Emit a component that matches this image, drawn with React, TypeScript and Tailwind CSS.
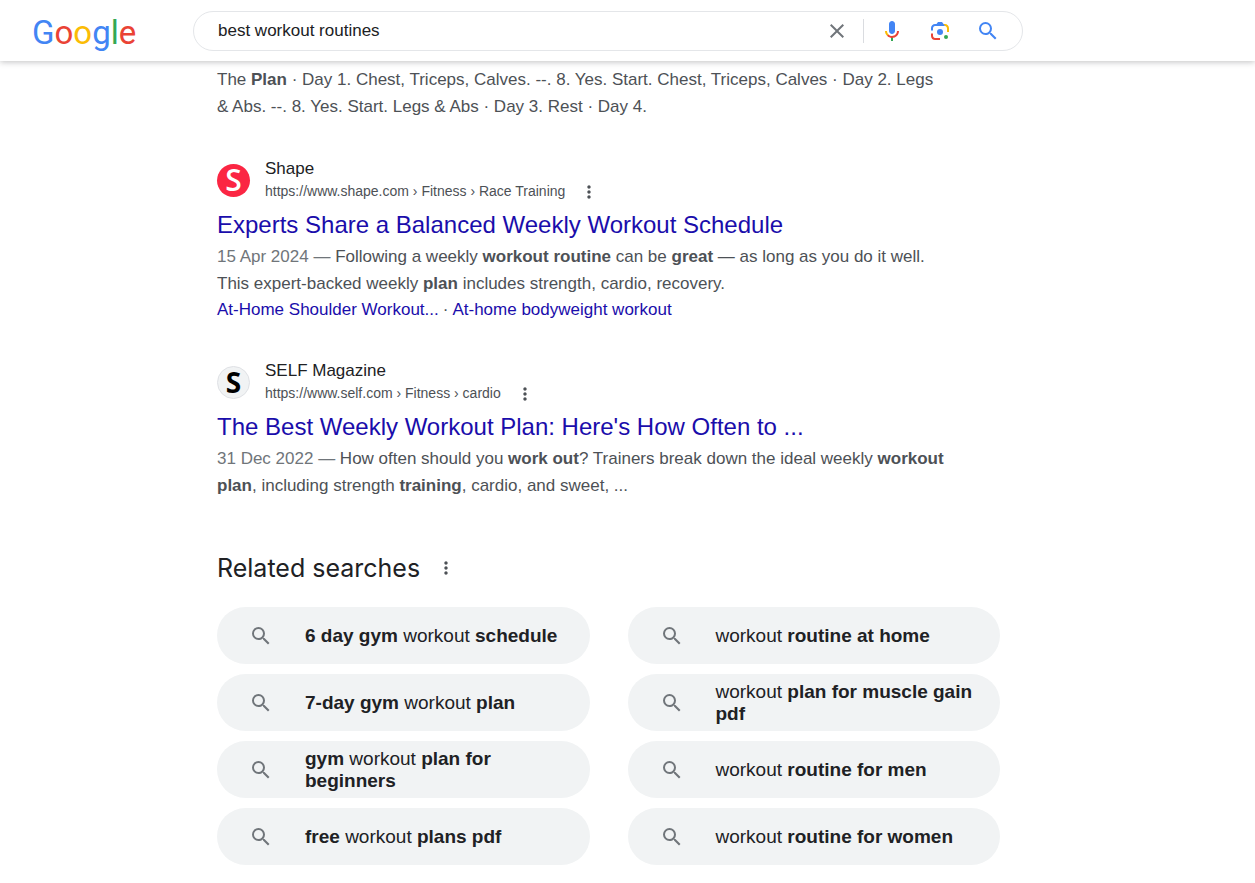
import React, { useState } from 'react';
import { MdClose, MdMoreVert, MdSearch } from 'react-icons/md';

interface SearchResultProps {
  site: string;
  url: string;
  title: string;
  date: string;
  favicon: React.ReactNode;
  children: React.ReactNode;
  links?: string[];
}

const relatedSearches: React.ReactNode[] = [
  <><b>6 day gym</b> workout <b>schedule</b></>,
  <>workout <b>routine at home</b></>,
  <><b>7-day gym</b> workout <b>plan</b></>,
  <>workout <b>plan for muscle gain pdf</b></>,
  <><b>gym</b> workout <b>plan for beginners</b></>,
  <>workout <b>routine for men</b></>,
  <><b>free</b> workout <b>plans pdf</b></>,
  <>workout <b>routine for women</b></>,
];

const Logo = () => (
  <a
    href="#"
    aria-label="Google"
    className="w-40 shrink-0 pl-8 pt-1 font-['Roboto',sans-serif] text-[33px] leading-10"
  >
    <span className="text-[#4285f4]">G</span>
    <span className="text-[#ea4335]">o</span>
    <span className="text-[#fbbc05]">o</span>
    <span className="text-[#4285f4]">g</span>
    <span className="text-[#34a853]">l</span>
    <span className="text-[#ea4335]">e</span>
  </a>
);

const MicIcon = () => (
  <svg viewBox="0 0 24 24" className="size-6">
    <path fill="#4285f4" d="m12 15c1.66 0 3-1.31 3-2.97v-7.02c0-1.66-1.34-3.01-3-3.01s-3 1.34-3 3.01v7.02c0 1.66 1.34 2.97 3 2.97z" />
    <path fill="#34a853" d="m11 18.08h2v3.92h-2z" />
    <path fill="#fbbc04" d="m7.05 16.87c-1.27-1.33-2.05-2.83-2.05-4.87h2c0 1.45 0.56 2.42 1.47 3.38v0.32l-1.15 1.18z" />
    <path fill="#ea4335" d="m12 16.93a4.97 5.25 0 0 1 -3.54 -1.55l-1.41 1.49c1.26 1.34 3.02 2.13 4.95 2.13 3.87 0 6.99-2.92 6.99-7h-1.99c0 2.92-2.24 4.93-5 4.93z" />
  </svg>
);

const LensIcon = () => (
  <svg viewBox="0 0 192 192" className="size-6">
    <circle fill="#34a853" cx="144" cy="144" r="16" />
    <circle fill="#4285f4" cx="96" cy="104" r="24" />
    <path fill="#ea4335" d="M24,135.2c0,18.11,14.69,32.8,32.8,32.8H96v-16l-40.1-0.1c-8.8,0-15.9-8.19-15.9-17.9v-18H24V135.2z" />
    <path fill="#fbbc04" d="M168,72.8c0-18.11-14.69-32.8-32.8-32.8H116l20,16c8.8,0,16,8.29,16,18v30h16V72.8z" />
    <path fill="#4285f4" d="M112,24l-32,0L68,40H56.8C38.69,40,24,54.69,24,72.8V92h16V74c0-9.71,7.2-18,16-18h80L124,40L112,24z" />
  </svg>
);

const SearchBar = () => {
  const [query, setQuery] = useState('best workout routines');

  return (
    <form
      role="search"
      onSubmit={(e) => e.preventDefault()}
      className="flex h-10 w-full max-w-[830px] items-center rounded-full border border-[#e4e6e9] pl-6 pr-[22px]"
    >
      <input
        type="text"
        aria-label="Search"
        value={query}
        onChange={(e) => setQuery(e.target.value)}
        className="min-w-0 flex-1 bg-transparent text-[17px] text-[#202124] outline-none"
      />
      <button type="button" aria-label="Clear" onClick={() => setQuery('')} className="text-[#70757a]">
        <MdClose className="size-6" />
      </button>
      <div className="ml-3.5 mr-4 h-6 w-px bg-[#dadce0]" />
      <div className="flex items-center gap-6">
        <button type="button" aria-label="Search by voice"><MicIcon /></button>
        <button type="button" aria-label="Search by image"><LensIcon /></button>
        <button type="submit" aria-label="Submit search" className="text-[#4285f4]">
          <MdSearch className="size-6" />
        </button>
      </div>
    </form>
  );
};

const SearchResult: React.FC<SearchResultProps> = ({ site, url, title, date, favicon, children, links }) => (
  <article>
    <div className="flex items-center">
      {favicon}
      <div className="ml-[15px]">
        <div className="text-[17px] leading-[23px] text-[#202124]">{site}</div>
        <div className="flex items-center text-sm leading-[23px] text-[#4d5156]">
          {url}
          <button type="button" aria-label={`About ${site}`} className="ml-3.5 text-[#4d5156]">
            <MdMoreVert className="size-5" />
          </button>
        </div>
      </div>
    </div>
    <h3 className="mt-1 text-2xl leading-9 text-[#1a0dab]">
      <a href="#">{title}</a>
    </h3>
    <p className="text-[17px] leading-[27px]">
      <span className="text-[#70757a]">{date} — </span>
      {children}
    </p>
    {links && (
      <div className="flex gap-1 text-[17px] leading-[26px]">
        {links.map((link, index) => (
          <React.Fragment key={link}>
            {index > 0 && <span>·</span>}
            <a href="#" className="text-[#1a0dab]">{link}</a>
          </React.Fragment>
        ))}
      </div>
    )}
  </article>
);

export default function App() {
  return (
    <div className="min-h-screen bg-white font-['Liberation_Sans',Arial,sans-serif] text-[#4d5156]">
      <header className="sticky top-0 z-10 flex h-[61px] items-center bg-white pr-8 shadow-[0_1px_6px_rgba(32,33,36,0.28)]">
        <Logo />
        <div className="ml-[33px] flex-1">
          <SearchBar />
        </div>
      </header>

      <main className="ml-[217px] max-w-[783px] pb-4 pt-[5px]">
        <div className="max-w-[730px]">
          <p className="text-[17px] leading-[27px]">
            The <b>Plan</b> · Day 1. Chest, Triceps, Calves. --. 8. Yes. Start. Chest, Triceps, Calves · Day 2. Legs
            &amp; Abs. --. 8. Yes. Start. Legs &amp; Abs · Day 3. Rest · Day 4.
          </p>

          <div className="mt-[37px] flex flex-col gap-9">
            <SearchResult
              site="Shape"
              url="https://www.shape.com › Fitness › Race Training"
              title="Experts Share a Balanced Weekly Workout Schedule"
              date="15 Apr 2024"
              links={['At-Home Shoulder Workout...', 'At-home bodyweight workout']}
              favicon={
                <span className="flex size-[33px] items-center justify-center rounded-full bg-[#fb2643] font-['Open_Sans',sans-serif] text-[30px] leading-8 font-semibold text-white">
                  S
                </span>
              }
            >
              Following a weekly <b>workout routine</b> can be <b>great</b> — as long as you do it well. This
              expert-backed weekly <b>plan</b> includes strength, cardio, recovery.
            </SearchResult>

            <SearchResult
              site="SELF Magazine"
              url="https://www.self.com › Fitness › cardio"
              title="The Best Weekly Workout Plan: Here's How Often to ..."
              date="31 Dec 2022"
              favicon={
                <span className="flex size-[33px] items-center justify-center rounded-full border border-[#dfe1e5] bg-[#f1f3f4] font-['Open_Sans',sans-serif] text-[28px] leading-8 font-bold text-black">
                  S
                </span>
              }
            >
              How often should you <b>work out</b>? Trainers break down the ideal weekly <b>workout plan</b>, including
              strength <b>training</b>, cardio, and sweet, ...
            </SearchResult>
          </div>
        </div>

        <section className="mt-[53px]">
          <div className="flex items-center">
            <h2 className="font-['Inter',sans-serif] text-[25px] leading-8 text-[#202124]">Related searches</h2>
            <button type="button" aria-label="About related searches" className="ml-4">
              <MdMoreVert className="size-5" />
            </button>
          </div>
          <div className="mt-[23px] grid grid-cols-2 gap-x-[38px] gap-y-2.5">
            {relatedSearches.map((search, index) => (
              <a
                key={index}
                href="#"
                className="flex h-[57px] items-center rounded-full bg-[#f1f3f4] pl-8 pr-4 text-[19px] leading-[22px] text-[#202124]"
              >
                <MdSearch className="size-6 shrink-0 text-[#70757a]" />
                <span className="ml-8">{search}</span>
              </a>
            ))}
          </div>
        </section>
      </main>
    </div>
  );
}
